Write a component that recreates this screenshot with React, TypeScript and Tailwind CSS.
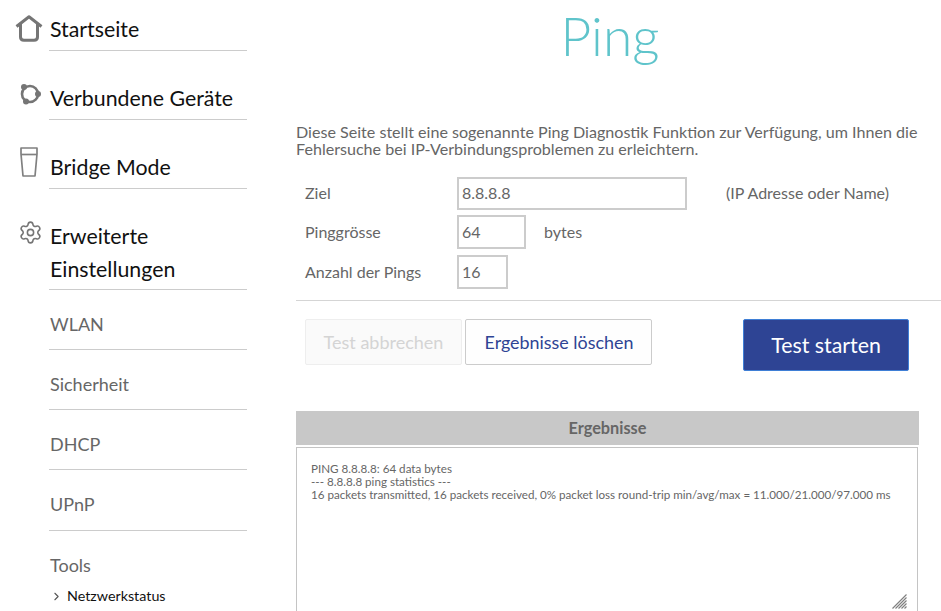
import React from 'react';
import { ChevronRight, Settings } from 'lucide-react';

const mainItem = "block border-b border-[#cccccc] text-[21.33px] leading-[33px] text-[#111111] ml-[49px] pl-[1px] pt-[1px] w-[198px]";
const subItem = "block border-b border-[#cccccc] text-[18px] leading-[24px] text-[#666666] ml-[49px] pl-[1px] w-[198px] h-[60px] pt-[22px]";
const field = "border-2 border-[#cccccc] px-[3px] pb-[2px] text-[16px] text-[#666666]";
const formRow = "flex h-[34px] items-center text-[16px] text-[#666666]";

function HomeIcon() {
  return (
    <svg width="28" height="28" viewBox="0 0 28 28" fill="none" className="absolute left-[15px] top-[15px]">
      <path d="M1.500 11.500 L14 1.800 L26.500 11.500 M5.500 9 V22 Q5.500 25.300 9 25.300 H19 Q22.500 25.300 22.500 22 V9" stroke="#757575" strokeWidth="3" strokeLinejoin="round" />
    </svg>
  );
}

function DevicesIcon() {
  return (
    <svg width="24" height="24" viewBox="0 0 24 24" fill="none" className="absolute left-[19px] top-[83px]">
      <circle cx="11" cy="11" r="8" stroke="#757575" strokeWidth="2.600" />
      <circle cx="5" cy="4" r="3" fill="#757575" />
      <circle cx="19" cy="11" r="3" fill="#757575" />
      <circle cx="7" cy="18.500" r="3" fill="#757575" />
    </svg>
  );
}

function BridgeIcon() {
  return (
    <svg width="20" height="32" viewBox="0 0 20 32" fill="none" className="absolute left-[19px] top-[146px]">
      <path d="M2 2 H18 V8 L16 30 H4 L2 8 Z" stroke="#808080" strokeWidth="1.700" strokeLinejoin="round" />
      <path d="M2 8.500 H18" stroke="#808080" strokeWidth="1.700" />
    </svg>
  );
}

function ResizeHandle() {
  return (
    <svg width="15" height="15" viewBox="0 0 15 15" fill="none" className="absolute left-[892px] top-[594px]">
      <path d="M0.500 14.500 L14.500 0.500 M3.500 14.500 L14.500 3.500 M6.500 14.500 L14.500 6.500 M9.500 14.500 L14.500 9.500 M12.500 14.500 L14.500 12.500" stroke="#808080" strokeWidth="1.200" />
    </svg>
  );
}

export default function App() {
  return (
    <div className="relative flex h-[611px] w-[941px] overflow-hidden bg-white font-['Lato','Open_Sans',sans-serif]">
      <nav className="relative w-[296px] shrink-0 pt-[12px]">
        <HomeIcon />
        <DevicesIcon />
        <BridgeIcon />
        <Settings size={25} strokeWidth={1.500} color="#757575" className="absolute left-[18px] top-[220px]" />

        <a className={mainItem + " h-[39px]"}>Startseite</a>
        <a className={mainItem + " mt-[30px] h-[39px]"}>Verbundene Geräte</a>
        <a className={mainItem + " mt-[30px] h-[39px]"}>Bridge Mode</a>
        <a className={mainItem + " mt-[30px] h-[71px]"}>Erweiterte Einstellungen</a>

        <a className={subItem}>WLAN</a>
        <a className={subItem}>Sicherheit</a>
        <a className={subItem}>DHCP</a>
        <a className={subItem + " h-[61px]"}>UPnP</a>
        <div className="ml-[50px] mt-[22px] text-[18px] leading-[24px] text-[#666666]">Tools</div>
        <div className="mt-[10px] ml-[50px] flex items-center gap-[4px] text-[14.300px] leading-[18px] text-[#111111]">
          <ChevronRight size={13} strokeWidth={2} color="#555555" />
          <span>Netzwerkstatus</span>
        </div>
      </nav>

      <main className="w-[655px] shrink-0">
        <h1 className="w-[628px] pt-[1px] text-center text-[53.330px] leading-[68px] font-light text-[#5fc4cb]">Ping</h1>
        <p className="mt-[54px] w-[640px] text-[16.100px] leading-[17px] text-[#666666]">
          Diese Seite stellt eine sogenannte Ping Diagnostik Funktion zur Verfügung, um Ihnen die Fehlersuche bei IP-Verbindungsproblemen zu erleichtern.
        </p>

        <div className={formRow + " mt-[19px]"}>
          <label className="ml-[9px] w-[152px]">Ziel</label>
          <input readOnly value="8.8.8.8" className={field + " h-[33px] w-[230px]"} />
          <span className="ml-[39px]">(IP Adresse oder Name)</span>
        </div>
        <div className={formRow + " mt-[5px]"}>
          <label className="ml-[9px] w-[152px]">Pinggrösse</label>
          <input readOnly value="64" className={field + " h-[34px] w-[69px]"} />
          <span className="ml-[18px]">bytes</span>
        </div>
        <div className={formRow + " mt-[6px]"}>
          <label className="ml-[9px] w-[152px]">Anzahl der Pings</label>
          <input readOnly value="16" className={field + " h-[34px] w-[51px]"} />
        </div>

        <div className="mt-[11px] h-px bg-[#d5d5d5]" />

        <div className="mt-[18px] flex items-start">
          <button className="ml-[9px] h-[46px] w-[157px] rounded-[2px] border border-[#eeeeee] bg-[#fafafa] text-[18px] text-[#d4d4d4]">Test abbrechen</button>
          <button className="ml-[3px] h-[46px] w-[187px] rounded-[2px] border border-[#cccccc] bg-[#fefefe] pl-[1px] text-[17.900px] text-[#2e4494]">Ergebnisse löschen</button>
          <button className="ml-[91px] h-[52px] w-[166px] rounded-[2px] border border-[#3f7fd6] bg-[#2e4494] pt-[1px] text-[21.330px] text-white">Test starten</button>
        </div>

        <div className="mt-[40px] flex h-[34px] w-[623px] items-center justify-center bg-[#c8c8c8] pt-[1px] text-[16.300px] font-bold text-[#666666]">Ergebnisse</div>
        <textarea
          readOnly
          className="mt-[2px] block h-[170px] w-[622px] resize-none border border-[#c4c4c4] px-[14px] pt-[14px] text-[11.640px] leading-[13px] text-[#666666]"
          value={"PING 8.8.8.8: 64 data bytes\n--- 8.8.8.8 ping statistics ---\n16 packets transmitted, 16 packets received, 0% packet loss round-trip min/avg/max = 11.000/21.000/97.000 ms"}
        />
      </main>
      <ResizeHandle />
    </div>
  );
}
